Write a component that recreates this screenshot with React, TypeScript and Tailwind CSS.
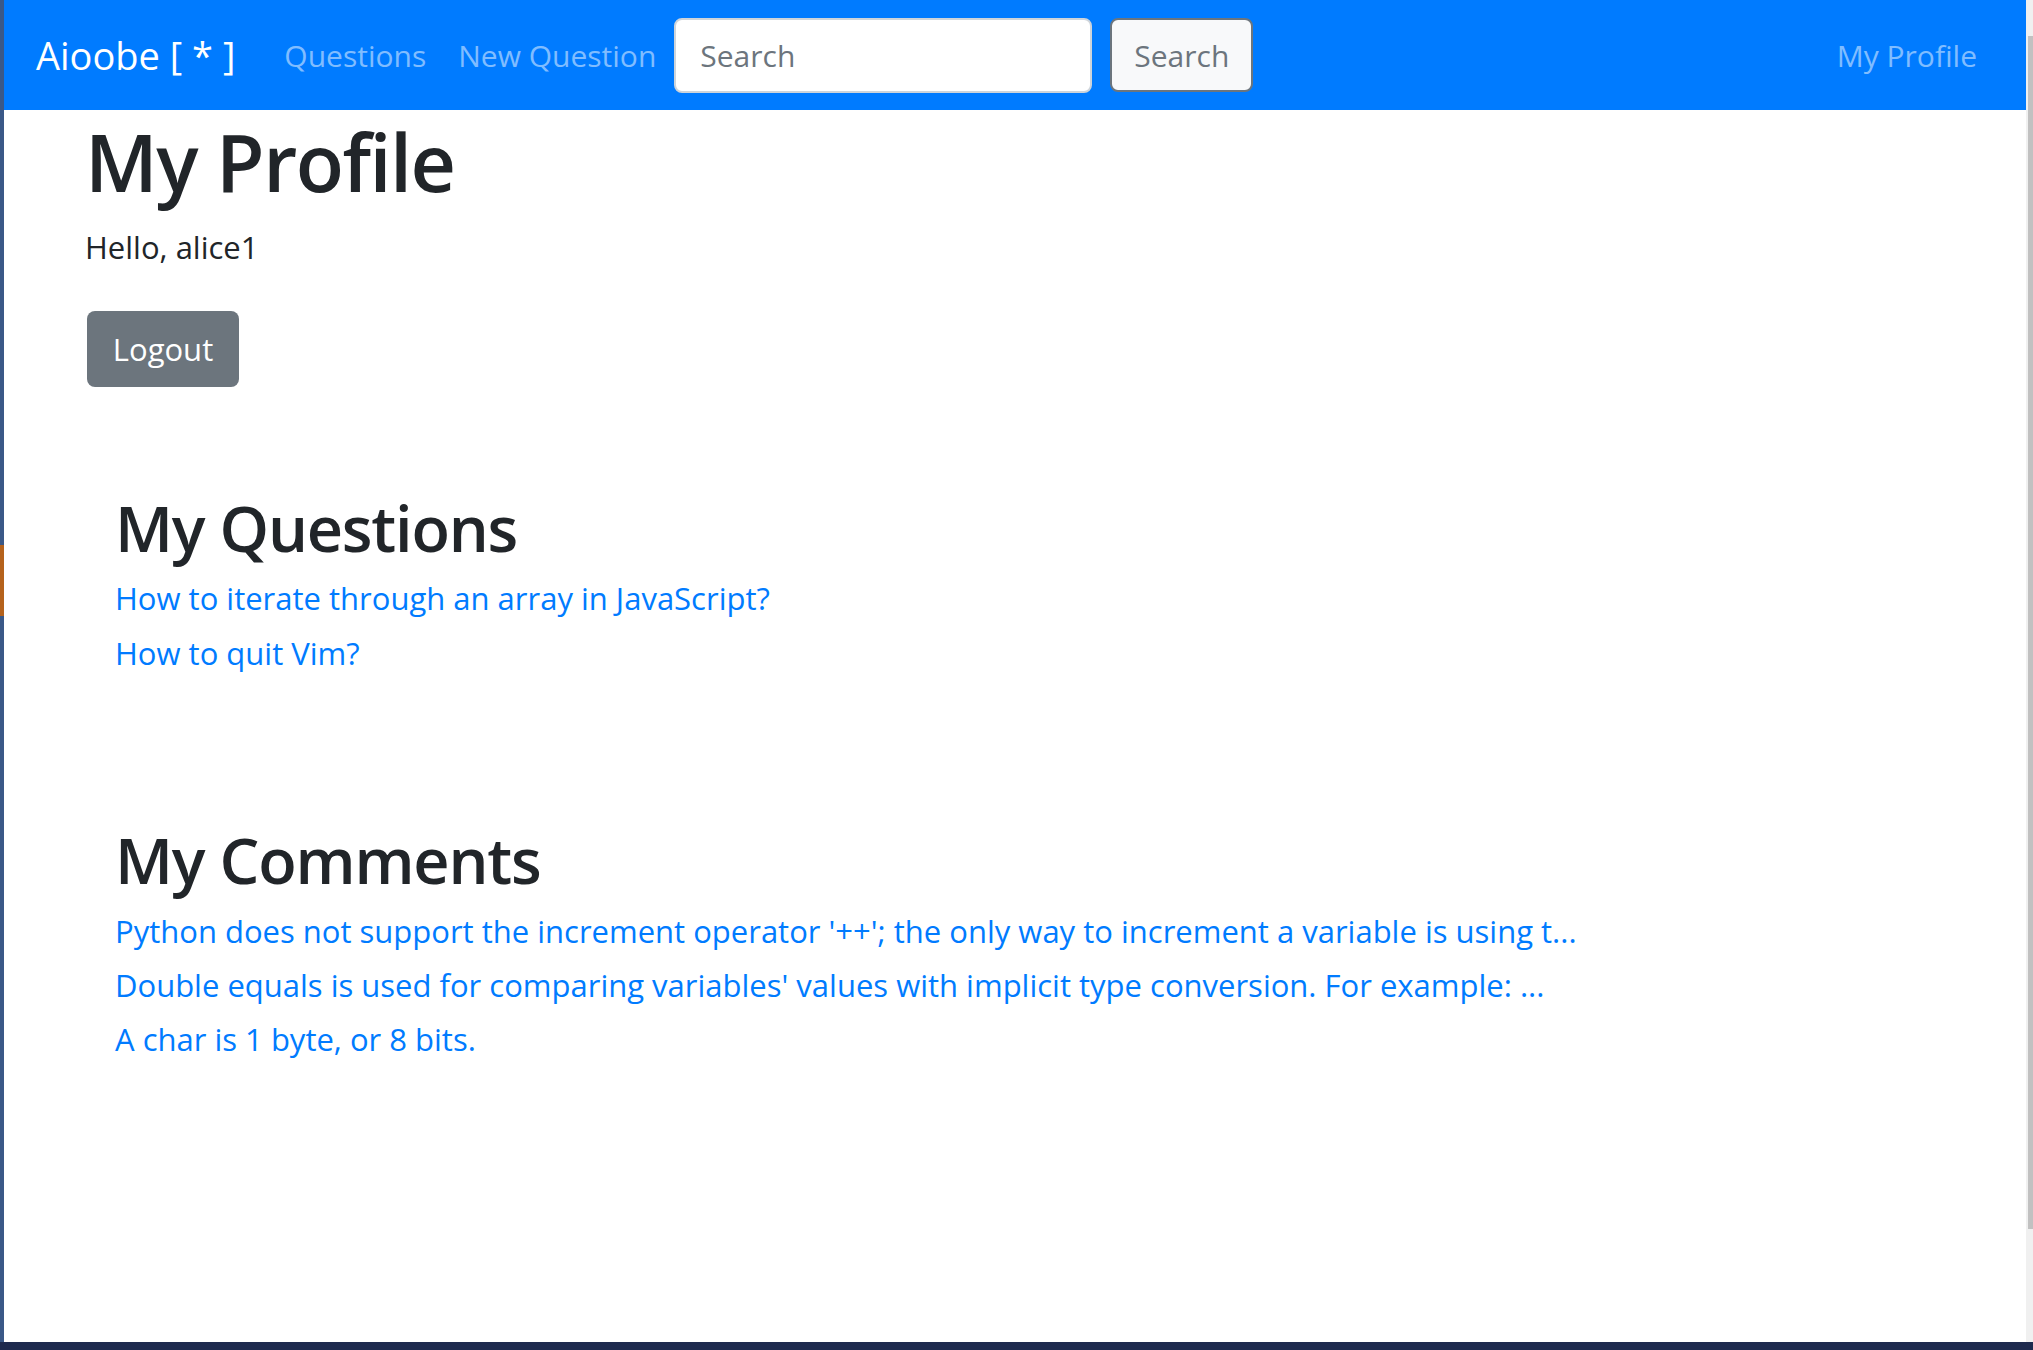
import React from 'react';

const questions = ['How to iterate through an array in JavaScript?', 'How to quit Vim?'];

const comments = [
  "Python does not support the increment operator '++'; the only way to increment a variable is using t...",
  "Double equals is used for comparing variables' values with implicit type conversion. For example: ...",
  'A char is 1 byte, or 8 bits.',
];

const App: React.FC = () => {
  return (
    <div className="h-[1350px] w-full flex flex-col bg-[#1e2a4e] overflow-hidden font-['Open_Sans',sans-serif]">
      <div className="flex h-[1342px]">
        {/* desktop peeking out on the left */}
        <div className="w-[4px] bg-[#3a5887] flex flex-col">
          <div className="h-[545px]" />
          <div className="h-[71px] bg-[#b5621c]" />
        </div>

        <div className="flex-1 bg-white flex flex-col">
          <nav className="h-[110px] bg-[#007bff] flex items-center pl-[32px] pr-[49px]">
            <span className="text-[38px] text-white mr-[33px] leading-none">Aioobe [ * ]</span>
            <a className="text-[30px] text-[#80bdff] px-[16px]">Questions</a>
            <a className="text-[30px] text-[#80bdff] px-[16px]">New Question</a>
            <div className="flex items-center gap-[18px] ml-[2px]">
              <input
                placeholder="Search"
                className="w-[418px] h-[75px] rounded-[8px] border-2 border-[#ced4da] bg-white px-[24px] text-[30px] text-[#495057] placeholder:text-[#6c757d] outline-none"
              />
              <button className="w-[143px] h-[74px] rounded-[8px] border-2 border-[#6c757d] bg-[#f8f9fa] text-[30px] text-[#6c757d]">
                Search
              </button>
            </div>
            <a className="ml-auto text-[30px] text-[#80bdff]">My Profile</a>
          </nav>

          <main className="pl-[81px] text-[#212529]">
            <h1 className="mt-[3px] text-[79px] font-semibold tracking-[-1.5px] leading-[98px]">My Profile</h1>
            <p className="mt-[12px] text-[31px] leading-[49px]">Hello, alice1</p>
            <button className="mt-[39px] ml-[2px] w-[152px] h-[76px] rounded-[8px] bg-[#6c757d] text-white text-[31px]">
              Logout
            </button>

            <section className="ml-[30px] mt-[102px]">
              <h2 className="text-[63px] font-semibold tracking-[-1.2px] leading-[78px]">My Questions</h2>
              <div className="mt-[7px] flex flex-col gap-[6px]">
                {questions.map((q) => (
                  <a key={q} className="text-[31px] font-medium leading-[49px] text-[#007bff]">
                    {q}
                  </a>
                ))}
              </div>
            </section>

            <section className="ml-[30px] mt-[143px]">
              <h2 className="text-[63px] font-semibold tracking-[-1.2px] leading-[78px]">My Comments</h2>
              <div className="mt-[8px] flex flex-col gap-[5px]">
                {comments.map((c) => (
                  <a key={c} className="text-[31px] font-medium leading-[49px] text-[#007bff]">
                    {c}
                  </a>
                ))}
              </div>
            </section>
          </main>
        </div>

        {/* browser scrollbar */}
        <div className="w-[7px] bg-[#f0f0f0] pt-[36px] pl-[2px]">
          <div className="h-[1193px] w-[5px] bg-[#c1c1c1]" />
        </div>
      </div>
    </div>
  );
};

export default App;
